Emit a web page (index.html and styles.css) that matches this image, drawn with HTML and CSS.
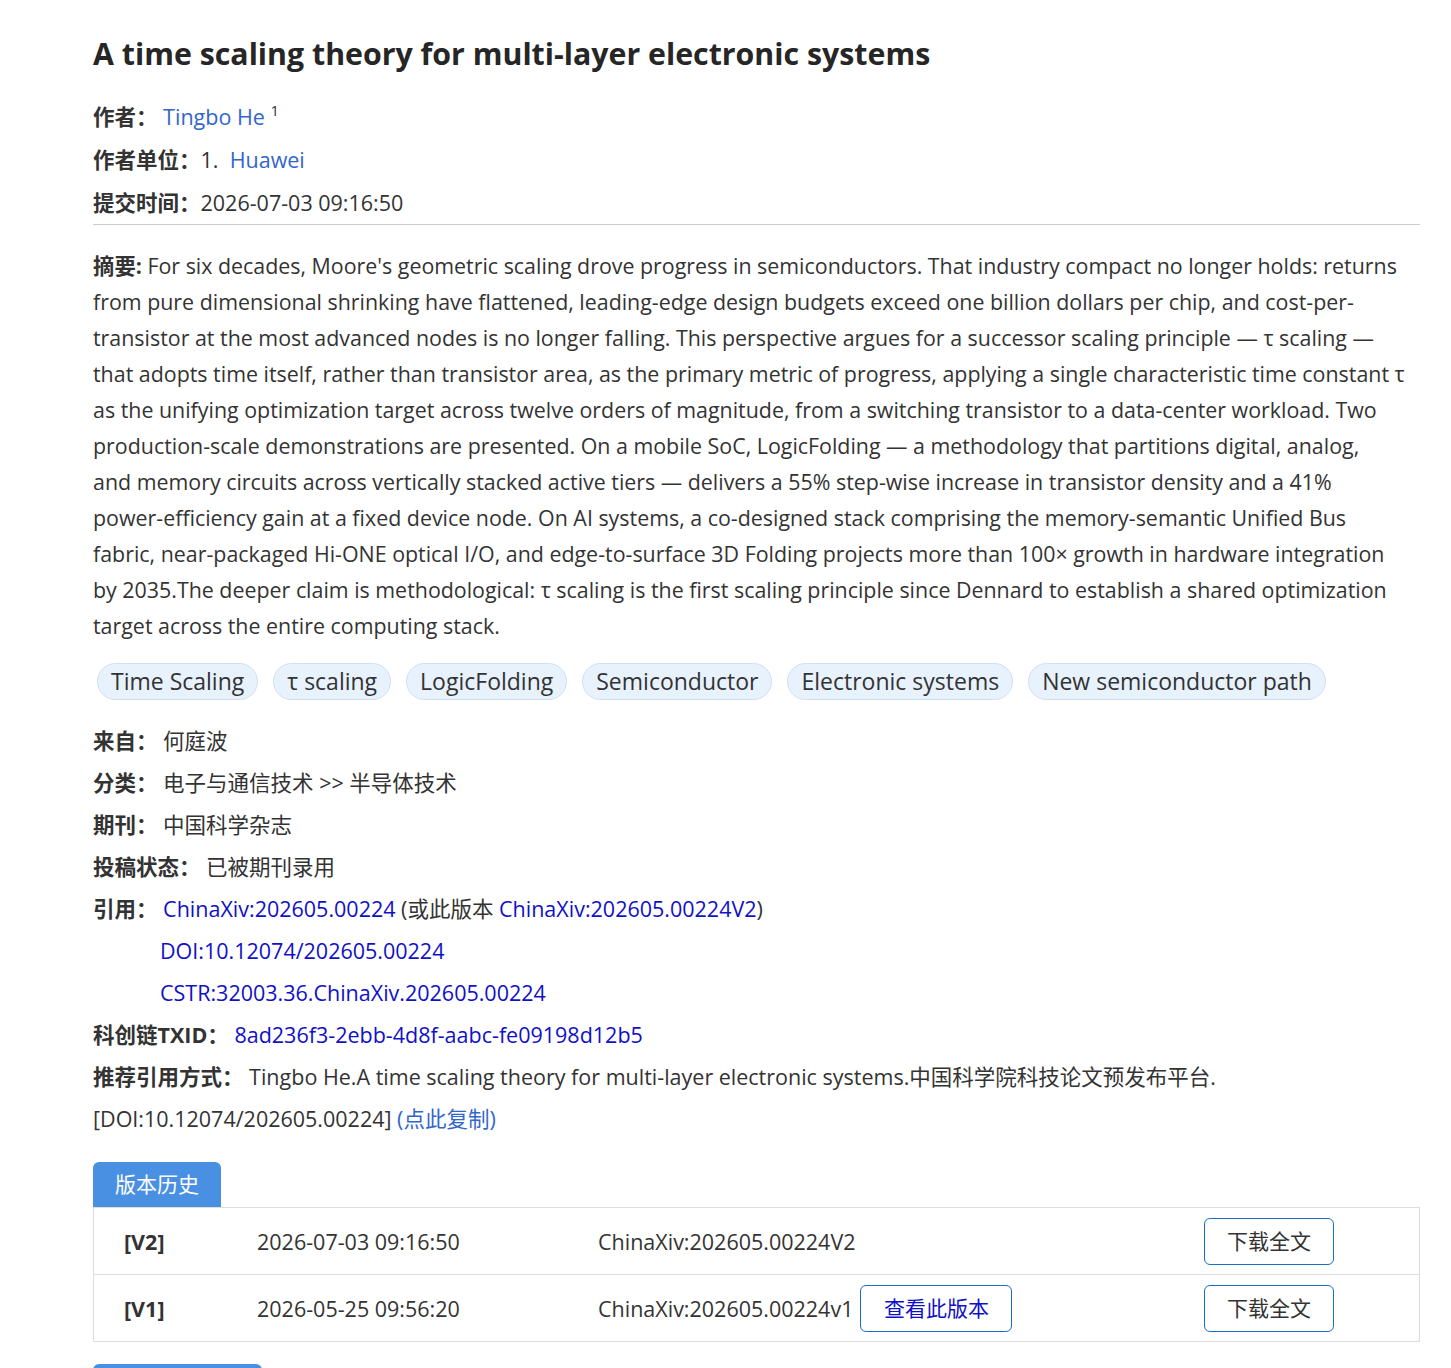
FILE: index.html
```html
<!DOCTYPE html>
<html lang="zh-CN">
<head>
    <meta charset="UTF-8">
    <meta name="viewport" content="width=device-width, initial-scale=1.0">
    <title>A time scaling theory for multi-layer electronic systems</title>
    <link rel="stylesheet" href="styles.css">
</head>
<body>
    <div class="paper">
        <h1 class="title">A time scaling theory for multi-layer electronic systems</h1>

        <div class="info">
            <p><b>作者：</b> <a class="soft" href="#">Tingbo He</a> <sup>1</sup></p>
            <p><b>作者单位：</b>1.&nbsp; <a class="soft" href="#">Huawei</a></p>
            <p><b>提交时间：</b>2026-07-03 09:16:50</p>
        </div>

        <p class="abstract"><b>摘要:</b> For six decades, Moore's geometric scaling drove progress in semiconductors. That industry compact no longer holds: returns<br>
        from pure dimensional shrinking have flattened, leading-edge design budgets exceed one billion dollars per chip, and cost-per-<br>transistor at the most advanced nodes is no longer falling. This perspective argues for a successor scaling principle — τ scaling —<br>
        that adopts time itself, rather than transistor area, as the primary metric of progress, applying a single characteristic time constant τ<br>
        as the unifying optimization target across twelve orders of magnitude, from a switching transistor to a data-center workload. Two<br>
        production-scale demonstrations are presented. On a mobile SoC, LogicFolding — a methodology that partitions digital, analog,<br>
        and memory circuits across vertically stacked active tiers — delivers a 55% step-wise increase in transistor density and a 41%<br>
        power-efficiency gain at a fixed device node. On AI systems, a co-designed stack comprising the memory-semantic Unified Bus<br>
        fabric, near-packaged Hi-ONE optical I/O, and edge-to-surface 3D Folding projects more than 100× growth in hardware integration<br>
        by 2035.The deeper claim is methodological: τ scaling is the first scaling principle since Dennard to establish a shared optimization<br>
        target across the entire computing stack.</p>

        <div class="tags">
            <span class="tag">Time Scaling</span>
            <span class="tag">τ scaling</span>
            <span class="tag">LogicFolding</span>
            <span class="tag">Semiconductor</span>
            <span class="tag">Electronic systems</span>
            <span class="tag">New semiconductor path</span>
        </div>

        <div class="meta">
            <p><b>来自：</b> 何庭波</p>
            <p><b>分类：</b> 电子与通信技术 &gt;&gt; 半导体技术</p>
            <p><b>期刊：</b> 中国科学杂志</p>
            <p><b>投稿状态：</b> 已被期刊录用</p>
            <p><b>引用：</b> <a class="deep" href="#">ChinaXiv:202605.00224</a> (或此版本 <a class="deep" href="#">ChinaXiv:202605.00224V2</a>)</p>
            <p class="indent"><a class="deep" href="#">DOI:10.12074/202605.00224</a></p>
            <p class="indent"><a class="deep" href="#">CSTR:32003.36.ChinaXiv.202605.00224</a></p>
            <p><b>科创链TXID：</b> <a class="deep" href="#">8ad236f3-2ebb-4d8f-aabc-fe09198d12b5</a></p>
            <p><b>推荐引用方式：</b> Tingbo He.A time scaling theory for multi-layer electronic systems.中国科学院科技论文预发布平台.</p>
            <p>[DOI:10.12074/202605.00224] <a class="soft" href="#">(点此复制)</a></p>
        </div>

        <div class="history">
            <div class="tab">版本历史</div>
            <div class="versions">
                <div class="row">
                    <span class="ver">[V2]</span>
                    <span class="date">2026-07-03 09:16:50</span>
                    <span class="id">ChinaXiv:202605.00224V2</span>
                    <span class="action"><a class="btn" href="#">下载全文</a></span>
                </div>
                <div class="row">
                    <span class="ver">[V1]</span>
                    <span class="date">2026-05-25 09:56:20</span>
                    <span class="id">ChinaXiv:202605.00224v1 <a class="btn view" href="#">查看此版本</a></span>
                    <span class="action"><a class="btn" href="#">下载全文</a></span>
                </div>
            </div>
            <div class="next-tab"></div>
        </div>
    </div>
</body>
</html>
```

FILE: styles.css
```css
body {
    margin: 0;
    padding: 0;
    font-family: "Open Sans", "Noto Sans CJK SC", sans-serif;
    color: #333;
    background: #fff;
}

a {
    text-decoration: none;
}

.paper {
    width: 1327px;
    margin-left: 93px;
    padding-top: 30px;
}

.title {
    margin: 0 0 17px;
    font-size: 30.3px;
    font-weight: bold;
    color: #262626;
    line-height: 48px;
}

.info {
    border-bottom: 1px solid #ccc;
}

.info p,
.meta p {
    margin: 0;
    font-size: 21.5px;
    line-height: 42px;
}

.info p {
    line-height: 43px;
}

.info b,
.meta b,
.abstract b {
    font-weight: bold;
    color: #333;
}

.info sup {
    font-size: 15px;
    line-height: 0;
    vertical-align: 9px;
}

.soft {
    color: #3366cc;
}

.deep {
    color: #1010c8;
}

.abstract {
    margin: 23px 0 19px;
    font-size: 21.4px;
    line-height: 36px;
    color: #333;
}

.tags {
    display: flex;
    flex-wrap: wrap;
    gap: 15px;
    margin-left: 4px;
    margin-bottom: 20px;
}

.tag {
    background: #e8f2fd;
    border: 1px solid #cfe0f2;
    border-radius: 20px;
    padding: 0 13px;
    font-size: 23px;
    line-height: 35px;
    color: #333;
}

.meta .indent {
    padding-left: 67px;
}

.history {
    margin-top: 22px;
}

.tab {
    display: inline-block;
    background: #4a90e2;
    color: #fff;
    font-size: 21px;
    line-height: 45px;
    padding: 0 22px;
    border-radius: 6px 6px 0 0;
}

.versions {
    border: 1px solid #ddd;
}

.row {
    display: flex;
    align-items: center;
    height: 66px;
    font-size: 21.5px;
}

.row + .row {
    border-top: 1px solid #ddd;
}

.ver {
    width: 133px;
    padding-left: 30px;
    font-weight: bold;
}

.date {
    width: 341px;
}

.id {
    width: 606px;
    display: flex;
    align-items: center;
    gap: 7px;
}

.btn {
    display: inline-block;
    border: 1px solid #1a6fc4;
    border-radius: 6px;
    width: 128px;
    line-height: 45px;
    text-align: center;
    color: #333;
    font-size: 21px;
}

.btn.view {
    width: 150px;
    color: #1010c8;
}

.next-tab {
    width: 169px;
    height: 30px;
    margin-top: 22px;
    background: #4a90e2;
    border-radius: 6px 6px 0 0;
}
```
